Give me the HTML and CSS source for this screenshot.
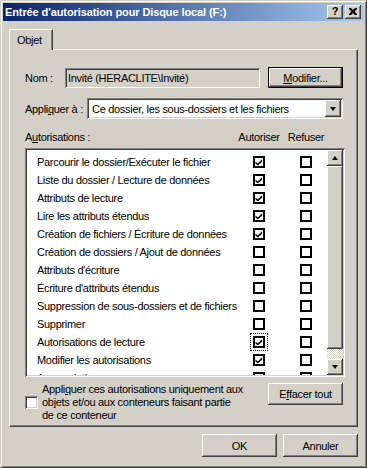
FILE: index.html
```html
<!DOCTYPE html>
<html lang="fr">
<head>
    <meta charset="UTF-8">
    <title>Entrée d'autorisation pour Disque local (F:)</title>
    <link rel="stylesheet" href="styles.css">
</head>
<body>
    <div class="window">
        <!-- Title bar -->
        <div class="titlebar">
            <span class="title">Entrée d'autorisation pour Disque local (F:)</span>
            <div class="title-buttons">
                <span class="tbtn help">?</span>
                <span class="tbtn close">
                    <svg width="8" height="7" viewBox="0 0 8 7"><path d="M0 0h2l2 2 2-2h2v1l-2.5 2.5L8 6v1H6L4 5 2 7H0V6l2.5-2.5L0 1z" fill="#000"/></svg>
                </span>
            </div>
        </div>

        <div class="client">
            <div class="tabs"><div class="tab">Objet</div></div>

            <div class="panel">
                <div class="form-row name-row">
                    <span class="name-label">Nom :</span>
                    <div class="field readonly">Invité (HERACLITE\Invité)</div>
                    <button class="btn default-btn"><u>M</u>odifier...</button>
                </div>

                <div class="form-row apply-row">
                    <span class="apply-label">Appli<u>q</u>uer à :</span>
                    <div class="field combo">
                        <span class="combo-text">Ce dossier, les sous-dossiers et les fichiers</span>
                        <span class="drop-btn"><span class="arrow-down"></span></span>
                    </div>
                </div>

                <div class="perm-header">
                    <span>A<u>u</u>torisations :</span>
                    <span class="col">Autoriser</span>
                    <span class="col">Refuser</span>
                </div>

                <div class="listbox">
                    <div class="perm-list">
                        <div class="perm-row"><span>Parcourir le dossier/Exécuter le fichier</span><span class="cell"><span class="chk on"></span></span><span class="cell"><span class="chk"></span></span></div>
                        <div class="perm-row"><span>Liste du dossier / Lecture de données</span><span class="cell"><span class="chk on"></span></span><span class="cell"><span class="chk"></span></span></div>
                        <div class="perm-row"><span>Attributs de lecture</span><span class="cell"><span class="chk on"></span></span><span class="cell"><span class="chk"></span></span></div>
                        <div class="perm-row"><span>Lire les attributs étendus</span><span class="cell"><span class="chk on"></span></span><span class="cell"><span class="chk"></span></span></div>
                        <div class="perm-row"><span>Création de fichiers / Écriture de données</span><span class="cell"><span class="chk on"></span></span><span class="cell"><span class="chk"></span></span></div>
                        <div class="perm-row"><span>Création de dossiers / Ajout de données</span><span class="cell"><span class="chk"></span></span><span class="cell"><span class="chk"></span></span></div>
                        <div class="perm-row"><span>Attributs d'écriture</span><span class="cell"><span class="chk"></span></span><span class="cell"><span class="chk"></span></span></div>
                        <div class="perm-row"><span>Écriture d'attributs étendus</span><span class="cell"><span class="chk"></span></span><span class="cell"><span class="chk"></span></span></div>
                        <div class="perm-row"><span>Suppression de sous-dossiers et de fichiers</span><span class="cell"><span class="chk"></span></span><span class="cell"><span class="chk"></span></span></div>
                        <div class="perm-row"><span>Supprimer</span><span class="cell"><span class="chk"></span></span><span class="cell"><span class="chk"></span></span></div>
                        <div class="perm-row"><span>Autorisations de lecture</span><span class="cell"><span class="chk on focus"></span></span><span class="cell"><span class="chk"></span></span></div>
                        <div class="perm-row"><span>Modifier les autorisations</span><span class="cell"><span class="chk on"></span></span><span class="cell"><span class="chk"></span></span></div>
                        <div class="perm-row"><span>Appropriation</span><span class="cell"><span class="chk on"></span></span><span class="cell"><span class="chk"></span></span></div>
                    </div>
                    <div class="scrollbar">
                        <span class="sbtn"><span class="arrow-up"></span></span>
                        <span class="thumb"></span>
                        <span class="track"></span>
                        <span class="sbtn"><span class="arrow-down"></span></span>
                    </div>
                </div>

                <div class="bottom-row">
                    <div class="inherit">
                        <span class="box3d"></span>
                        <span class="inherit-text">Appli<u>q</u>uer ces autorisations uniquement aux<br>objets et/ou aux conteneurs faisant partie<br>de ce conteneur</span>
                    </div>
                    <button class="btn clear-btn">E<u>f</u>facer tout</button>
                </div>
            </div>

            <div class="footer">
                <button class="btn">OK</button>
                <button class="btn">Annuler</button>
            </div>
        </div>
    </div>
</body>
</html>
```

FILE: styles.css
```css
* {
    box-sizing: border-box;
}
body {
    margin: 0;
    font-family: "Liberation Sans", Arial, sans-serif;
    font-size: 11px;
    letter-spacing: -0.3px;
    color: #000;
    background: #fff;
}
u {
    text-underline-offset: 1px;
}
.window {
    width: 367px;
    height: 468px;
    padding: 2px;
    background: #d4d0c8;
    border: 1px solid;
    border-color: #d4d0c8 #404040 #404040 #d4d0c8;
    box-shadow: inset 1px 1px #fff, inset -1px -1px #808080;
    display: flex;
    flex-direction: column;
}

/* title bar */
.titlebar {
    height: 18px;
    padding: 0 3px 0 2px;
    background: linear-gradient(to right, #0a246a, #a6caf0);
    display: flex;
    align-items: center;
    justify-content: space-between;
}
.title {
    color: #fff;
    font-weight: bold;
    font-size: 11px;
    letter-spacing: -0.1px;
    white-space: nowrap;
}
.title-buttons {
    display: flex;
    gap: 2px;
}
.tbtn {
    width: 16px;
    height: 14px;
    background: #d4d0c8;
    box-shadow: inset -1px -1px #404040, inset 1px 1px #fff, inset -2px -2px #808080;
    display: flex;
    align-items: center;
    justify-content: center;
    font-weight: bold;
    font-size: 11px;
    letter-spacing: 0;
    line-height: 1;
    padding-bottom: 1px;
}

/* raised button */
.btn {
    font: inherit;
    letter-spacing: inherit;
    color: #000;
    width: 75px;
    height: 23px;
    padding: 0;
    border: none;
    background: #d4d0c8;
    box-shadow: inset -1px -1px #404040, inset 1px 1px #fff, inset -2px -2px #808080, inset 2px 2px #d4d0c8;
}
.default-btn {
    height: 21px;
    border: 1px solid #000;
}
.clear-btn {
    height: 22px;
}

/* sunken field */
.field {
    height: 21px;
    background: #fff;
    box-shadow: inset 1px 1px #808080, inset -1px -1px #fff, inset 2px 2px #404040, inset -2px -2px #d4d0c8;
    display: flex;
    align-items: center;
    white-space: nowrap;
}
.readonly {
    background: #d4d0c8;
    width: 195px;
    height: 20px;
    padding-left: 3px;
}

.client {
    flex: 1;
    padding: 8px 6px 0 6px;
}
.tabs {
    height: 20px;
    display: flex;
    align-items: flex-end;
}
.tab {
    position: relative;
    z-index: 1;
    width: 44px;
    height: 21px;
    margin-bottom: -1px;
    padding: 4px 0 0 7px;
    background: #d4d0c8;
    border-left: 1px solid #fff;
    border-top: 1px solid #fff;
    border-right: 1px solid #404040;
    border-top-left-radius: 2px;
    box-shadow: inset -1px 0 #808080;
}
.panel {
    height: 378px;
    padding: 17px 12px 0 15px;
    border-left: 1px solid #fff;
    border-top: 1px solid #fff;
    border-right: 1px solid #404040;
    border-bottom: 1px solid #404040;
    box-shadow: inset -1px -1px #808080;
}

.form-row {
    display: flex;
    align-items: center;
    height: 21px;
    padding-right: 2px;
}
.name-label {
    width: 40px;
}
.name-row .btn {
    margin-left: auto;
}
.apply-row {
    margin-top: 10px;
}
.apply-label {
    width: 62px;
    white-space: nowrap;
}
.combo {
    flex: 1;
    padding: 2px;
}
.combo-text {
    flex: 1;
    padding-left: 3px;
}
.drop-btn {
    width: 16px;
    height: 17px;
    background: #d4d0c8;
    box-shadow: inset -1px -1px #404040, inset 1px 1px #fff, inset -2px -2px #808080;
    display: flex;
    align-items: center;
    justify-content: center;
}
.arrow-down, .arrow-up {
    width: 0;
    height: 0;
    border-left: 3.5px solid transparent;
    border-right: 3.5px solid transparent;
}
.arrow-down {
    border-top: 4px solid #000;
}
.arrow-up {
    border-bottom: 4px solid #000;
}

/* permissions */
.perm-header {
    margin-top: 11px;
    height: 14px;
    display: grid;
    grid-template-columns: 207px 40px 40px;
    column-gap: 7px;
    align-items: center;
    white-space: nowrap;
}
.col {
    display: flex;
    justify-content: center;
}
.listbox {
    margin-top: 4px;
    height: 229px;
    padding: 2px;
    background: #fff;
    box-shadow: inset 1px 1px #808080, inset -1px -1px #fff, inset 2px 2px #404040, inset -2px -2px #d4d0c8;
    display: flex;
}
.perm-list {
    flex: 1;
    overflow: hidden;
    padding-top: 3px;
}
.perm-row {
    height: 18px;
    display: grid;
    grid-template-columns: 195px 40px 40px;
    column-gap: 7px;
    align-items: center;
    white-space: nowrap;
    padding-left: 10px;
}
.cell {
    display: flex;
    justify-content: center;
}
.chk {
    width: 12px;
    height: 12px;
    border: 2px solid #000;
    background: #fff;
}
.chk.on {
    background: #fff url("data:image/svg+xml,%3Csvg xmlns='http://www.w3.org/2000/svg' width='8' height='8' viewBox='0 0 8 8'%3E%3Cpath d='M0.5 3.5L2.8 5.6L7.2 1.2V3.6L2.8 7.6L0.5 5.6Z' fill='%23000'/%3E%3C/svg%3E") no-repeat center;
}
.chk.focus {
    outline: 1px dotted #000;
    outline-offset: 2px;
}
.scrollbar {
    width: 16px;
    display: flex;
    flex-direction: column;
}
.sbtn, .thumb {
    background: #d4d0c8;
    box-shadow: inset -1px -1px #404040, inset 1px 1px #fff, inset -2px -2px #808080, inset 2px 2px #d4d0c8;
}
.sbtn {
    height: 16px;
    display: flex;
    align-items: center;
    justify-content: center;
}
.thumb {
    height: 183px;
}
.track {
    flex: 1;
    background-color: #d4d0c8;
    background-image: conic-gradient(#fff 25%, #d4d0c8 0 50%, #fff 0 75%, #d4d0c8 0);
    background-size: 2px 2px;
}

.bottom-row {
    margin-top: 6px;
    display: flex;
    justify-content: space-between;
    align-items: flex-start;
    padding-right: 2px;
}
.inherit {
    display: flex;
    align-items: center;
    gap: 4px;
}
.box3d {
    width: 13px;
    height: 13px;
    background: #fff;
    box-shadow: inset 1px 1px #808080, inset -1px -1px #fff, inset 2px 2px #404040, inset -2px -2px #d4d0c8;
}
.inherit-text {
    line-height: 13px;
    white-space: nowrap;
}

.footer {
    margin-top: 7px;
    display: flex;
    justify-content: flex-end;
    gap: 6px;
}
```
